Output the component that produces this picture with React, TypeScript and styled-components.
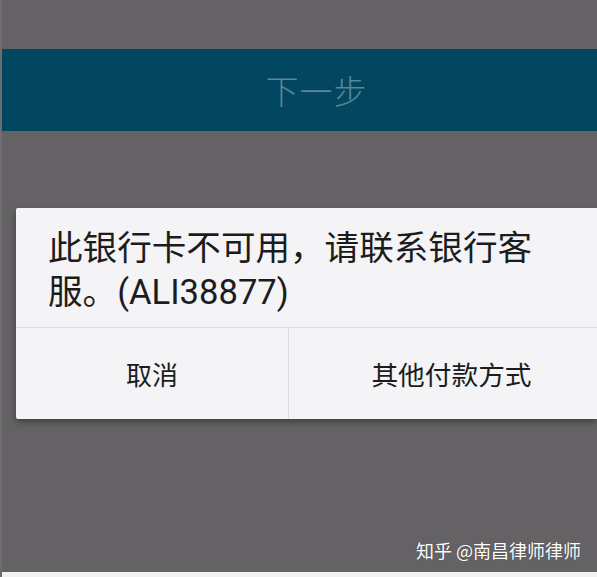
import React from "react";
import styled, { createGlobalStyle } from "styled-components";

const Global = createGlobalStyle`
  html, body { margin: 0; padding: 0; }
  body {
    background: #646264;
    font-family: Roboto, "Noto Sans CJK SC", sans-serif;
  }
`;

const Screen = styled.div`
  position: relative;
  width: 597px;
  height: 577px;
  display: flex;
  flex-direction: column;
  background: #646264;
  overflow: hidden;
  border-left: 2px solid #6e6c6e;
  box-sizing: border-box;
`;

const TopSpace = styled.div`
  height: 49px;
  flex: none;
`;

const NextBar = styled.div`
  height: 82px;
  flex: none;
  background: #03465f;
  display: flex;
  align-items: center;
  justify-content: center;
  color: #5b8797;
  font-family: "Noto Sans CJK SC", sans-serif;
  font-size: 33px;
  font-weight: 300;
  letter-spacing: 1px;
  padding-left: 34px;
`;

const Gap = styled.div`
  height: 77px;
  flex: none;
`;

const Dialog = styled.div`
  margin-left: 14px;
  flex: none;
  background: #f4f3f5;
  border-radius: 2px 0 0 2px;
  box-shadow: 0 3px 6px rgba(0, 0, 0, 0.35);
  display: flex;
  flex-direction: column;
`;

const Message = styled.div`
  padding: 18px 30px 13px 32px;
  font-size: 34.6px;
  line-height: 44px;
  color: #1c1c1c;
  font-family: Roboto, "Noto Sans CJK SC", sans-serif;
`;

const Actions = styled.div`
  display: grid;
  grid-template-columns: 272px 1fr;
  border-top: 1px solid #dcdbdd;
  height: 91px;
`;

const Action = styled.button<{ $divider?: boolean }>`
  border: none;
  background: transparent;
  font-family: "Noto Sans CJK SC", sans-serif;
  font-size: ${(p) => (p.$divider ? "26.7px" : "26px")};
  color: #1c1c1c;
  border-left: ${(p) => (p.$divider ? "1px solid #dcdbdd" : "none")};
  padding: 0 0 0 ${(p) => (p.$divider ? "17px" : "0")};
  cursor: pointer;
`;

const Filler = styled.div`
  flex: 1;
`;

const BottomStrip = styled.div`
  height: 5px;
  flex: none;
  background: #f2f2f2;
`;

const Watermark = styled.div`
  position: absolute;
  right: 16px;
  bottom: 14px;
  color: #ffffff;
  font-family: "Noto Sans CJK SC", sans-serif;
  font-size: 18px;
  text-shadow: 0 0 1px rgba(0, 0, 0, 0.4);
  white-space: nowrap;
`;

export default function App() {
  return (
    <>
      <Global />
      <Screen>
        <TopSpace />
        <NextBar>下一步</NextBar>
        <Gap />
        <Dialog>
          <Message>
            此银行卡不可用，请联系银行客服。(ALI38877)
          </Message>
          <Actions>
            <Action>取消</Action>
            <Action $divider>其他付款方式</Action>
          </Actions>
        </Dialog>
        <Filler />
        <BottomStrip />
        <Watermark>知乎 @南昌律师律师</Watermark>
      </Screen>
    </>
  );
}
